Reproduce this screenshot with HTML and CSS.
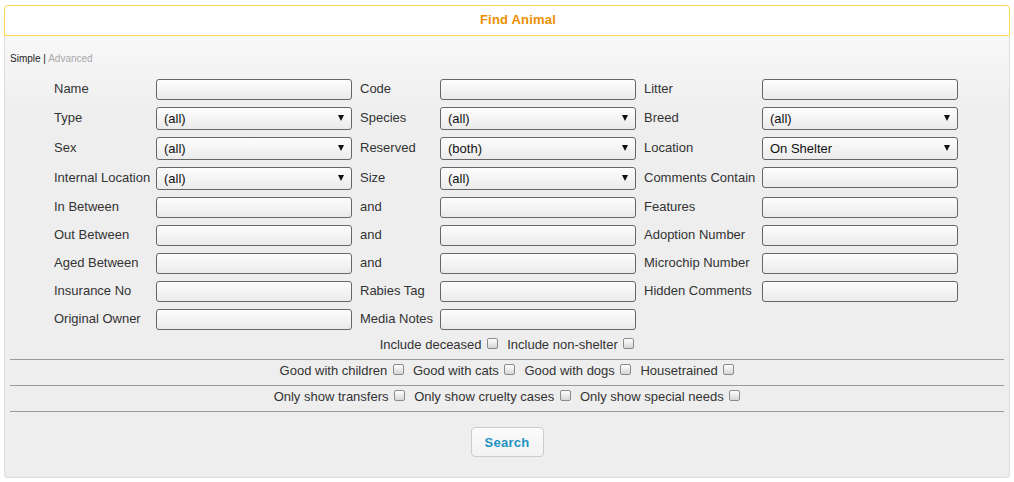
FILE: index.html
```html
<!DOCTYPE html>
<html>
<head>
<meta charset="utf-8">
<link rel="stylesheet" href="styles.css">
</head>
<body>
<div class="panel">
  <div class="panel-header">Find Animal</div>
  <div class="panel-body">
    <div class="mode"><span class="mode-on">Simple</span> | <span class="mode-off">Advanced</span></div>
    <div class="form-grid">
      <label class="lbl">Name</label><span class="cell"><input class="txt"></span>
      <label class="lbl">Code</label><span class="cell"><input class="txt"></span>
      <label class="lbl">Litter</label><span class="cell"><input class="txt"></span>

      <label class="lbl">Type</label><span class="cell"><span class="sel">(all)</span></span>
      <label class="lbl">Species</label><span class="cell"><span class="sel">(all)</span></span>
      <label class="lbl">Breed</label><span class="cell"><span class="sel">(all)</span></span>

      <label class="lbl">Sex</label><span class="cell"><span class="sel">(all)</span></span>
      <label class="lbl">Reserved</label><span class="cell"><span class="sel">(both)</span></span>
      <label class="lbl">Location</label><span class="cell"><span class="sel">On Shelter</span></span>

      <label class="lbl">Internal Location</label><span class="cell"><span class="sel">(all)</span></span>
      <label class="lbl">Size</label><span class="cell"><span class="sel">(all)</span></span>
      <label class="lbl">Comments Contain</label><span class="cell"><input class="txt"></span>

      <label class="lbl">In Between</label><span class="cell"><input class="txt"></span>
      <label class="lbl">and</label><span class="cell"><input class="txt"></span>
      <label class="lbl">Features</label><span class="cell"><input class="txt"></span>

      <label class="lbl">Out Between</label><span class="cell"><input class="txt"></span>
      <label class="lbl">and</label><span class="cell"><input class="txt"></span>
      <label class="lbl">Adoption Number</label><span class="cell"><input class="txt"></span>

      <label class="lbl">Aged Between</label><span class="cell"><input class="txt"></span>
      <label class="lbl">and</label><span class="cell"><input class="txt"></span>
      <label class="lbl">Microchip Number</label><span class="cell"><input class="txt"></span>

      <label class="lbl">Insurance No</label><span class="cell"><input class="txt"></span>
      <label class="lbl">Rabies Tag</label><span class="cell"><input class="txt"></span>
      <label class="lbl">Hidden Comments</label><span class="cell"><input class="txt"></span>

      <label class="lbl">Original Owner</label><span class="cell"><input class="txt"></span>
      <label class="lbl">Media Notes</label><span class="cell"><input class="txt"></span>
      <span></span><span></span>
    </div>

    <div class="checks first">
      <label class="chk">Include deceased <input type="checkbox" class="box"></label>
      <label class="chk">Include non-shelter <input type="checkbox" class="box"></label>
    </div>
    <hr class="rule">
    <div class="checks">
      <label class="chk">Good with children <input type="checkbox" class="box"></label>
      <label class="chk">Good with cats <input type="checkbox" class="box"></label>
      <label class="chk">Good with dogs <input type="checkbox" class="box"></label>
      <label class="chk">Housetrained <input type="checkbox" class="box"></label>
    </div>
    <hr class="rule">
    <div class="checks">
      <label class="chk">Only show transfers <input type="checkbox" class="box"></label>
      <label class="chk">Only show cruelty cases <input type="checkbox" class="box"></label>
      <label class="chk">Only show special needs <input type="checkbox" class="box"></label>
    </div>
    <hr class="rule">
    <div class="actions">
      <button class="btn">Search</button>
    </div>
  </div>
</div>
</body>
</html>
```

FILE: styles.css
```css
html, body {
  background: #ffffff;
}
body {
  margin: 5px 4px;
  font-family: "Liberation Sans", Arial, sans-serif;
  font-size: 13px;
  color: #333333;
}
.panel {
  width: 1006px;
}
.panel-header {
  height: 29px;
  line-height: 27px;
  border: 1px solid #fbd850;
  border-radius: 4px 4px 0 0;
  background: #ffffff;
  color: #eb8f00;
  font-weight: bold;
  font-size: 13px;
  text-align: center;
  letter-spacing: 0.2px;
  padding-left: 22px;
  box-sizing: content-box;
  width: 982px;
}
.panel-body {
  border: 1px solid #dddddd;
  border-top: none;
  border-radius: 0 0 4px 4px;
  background: linear-gradient(to bottom, #f8f8f8 0px, #eeeeee 80px, #eeeeee 100%);
  padding: 17px 5px 0 5px;
  height: 424px;
  box-sizing: content-box;
}
.mode {
  font-size: 10px;
  line-height: 12px;
  height: 12px;
  margin-bottom: 11px;
  color: #222222;
}
.mode-off {
  color: #aaaaaa;
}
.form-grid {
  display: grid;
  width: 906px;
  margin: 0 auto;
  grid-template-columns: 102px 204px 80px 204px 118px 198px;
  grid-template-rows: 28px 30px 30px 30px 28px 28px 28px 28px 28px;
}
.lbl {
  align-self: center;
  white-space: nowrap;
  color: #333333;
  line-height: 15px;
  padding-bottom: 3px;
}
.cell {
  display: block;
  padding-top: 3px;
}
.txt {
  display: block;
  box-sizing: border-box;
  width: 196px;
  height: 21px;
  margin: 0;
  padding: 0 6px;
  border: 1px solid #666666;
  border-radius: 3px;
  background: linear-gradient(to bottom, #fdfdfd, #ebebeb);
  font: 13px "Liberation Sans", Arial, sans-serif;
  outline: none;
}
.sel {
  position: relative;
  display: block;
  box-sizing: border-box;
  width: 196px;
  height: 23px;
  line-height: 21px;
  padding: 0 0 0 7px;
  border: 1px solid #666666;
  border-radius: 3px;
  background: linear-gradient(to bottom, #fdfdfd, #ebebeb);
  color: #111111;
  font-size: 13px;
}
.sel::after {
  content: "";
  position: absolute;
  right: 7px;
  top: 7px;
  width: 0;
  height: 0;
  border-left: 3px solid transparent;
  border-right: 3px solid transparent;
  border-top: 6px solid #111111;
}
.checks {
  display: flex;
  justify-content: center;
  gap: 9px;
  height: 16px;
  line-height: 16px;
  margin-top: 3px;
  margin-bottom: 6px;
}
.chk {
  display: flex;
  align-items: center;
  color: #333333;
  white-space: pre;
}
.box {
  -webkit-appearance: none;
  appearance: none;
  box-sizing: border-box;
  width: 11px;
  height: 11px;
  margin: 0 0 3px 2px;
  border: 1px solid #8a8a8a;
  border-radius: 2px;
  background: linear-gradient(to bottom, #ffffff, #d6d6d6);
}
.rule {
  border: none;
  height: 1px;
  background: #9a9a9a;
  margin: 0;
}
.actions {
  display: flex;
  justify-content: center;
  padding-top: 15px;
}
.btn {
  box-sizing: border-box;
  width: 73px;
  height: 30px;
  border: 1px solid #cccccc;
  border-radius: 4px;
  background: linear-gradient(to bottom, #fbfbfb, #f2f2f2);
  color: #1c94c4;
  font: bold 13px "Liberation Sans", Arial, sans-serif;
  letter-spacing: 0.3px;
  padding: 0;
}
```
